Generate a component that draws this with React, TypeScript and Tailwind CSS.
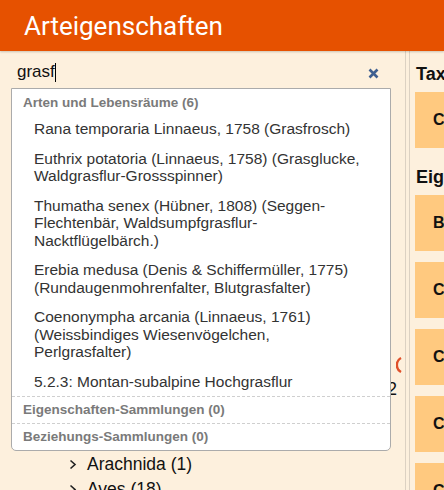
import { useState } from "react";

const results = [
  "Rana temporaria Linnaeus, 1758 (Grasfrosch)",
  "Euthrix potatoria (Linnaeus, 1758) (Grasglucke, Waldgrasflur-Grossspinner)",
  "Thumatha senex (Hübner, 1808) (Seggen-Flechtenbär, Waldsumpfgrasflur-Nacktflügelbärch.)",
  "Erebia medusa (Denis & Schiffermüller, 1775) (Rundaugenmohrenfalter, Blutgrasfalter)",
  "Coenonympha arcania (Linnaeus, 1761) (Weissbindiges Wiesenvögelchen, Perlgrasfalter)",
  "5.2.3: Montan-subalpine Hochgrasflur",
];

const Chevron = () => (
  <svg width="8" height="11" viewBox="0 0 8 11" className="shrink-0">
    <path d="M1.5 1.5 L6 5.5 L1.5 9.5" fill="none" stroke="#222" strokeWidth="1.6" />
  </svg>
);

const App = () => {
  const [query] = useState("grasf");

  return (
    <div className="w-[444px] h-[490px] overflow-hidden flex flex-col bg-[#fdf0dd] font-['Liberation_Sans',Arial,sans-serif]">
      <header className="h-[51px] shrink-0 bg-[#e65100] flex items-center px-6 shadow-[0_1px_2px_rgba(0,0,0,0.2)] z-10">
        <h1 className="text-white text-[26px] font-['Roboto',sans-serif] font-normal leading-none">
          Arteigenschaften
        </h1>
      </header>

      <div className="flex flex-1 min-h-0">
        {/* left: search + taxonomy tree */}
        <div className="w-[406px] shrink-0 border-r border-[#dcd1c2] relative overflow-hidden">
          <div className="h-[37px] pt-[11px] pl-[17px] pr-[26px] flex justify-between">
            <div className="flex items-center h-[20px] text-[17px] leading-[20px] text-[#111]">
              <span>{query}</span>
              <span className="w-px h-[19px] bg-black" />
            </div>
            <svg width="11" height="11" viewBox="0 0 11 11" className="mt-[6px]">
              <path d="M1.5 1.5 L9.5 9.5 M9.5 1.5 L1.5 9.5" stroke="#3f5f90" strokeWidth="2.6" />
            </svg>
          </div>

          <div className="pt-[264px] text-[17.5px] leading-[25px] text-[#111]">
            <div className="h-[25px] flex justify-end pr-[3px]">
              <svg width="6" height="16" viewBox="0 0 6 16" className="mt-[5px]">
                <path d="M5 1 A8 8 0 0 0 5 15" fill="none" stroke="#e0502a" strokeWidth="2.4" />
              </svg>
            </div>
            <div className="h-[25px] flex justify-end pr-[8px]">2</div>
            <div className="h-[25px]" />
            <div className="h-[25px]" />
            <div className="h-[25px] flex items-center gap-[10px] pl-[69px]">
              <Chevron />
              <span>Arachnida (1)</span>
            </div>
            <div className="h-[25px] flex items-center gap-[10px] pl-[69px]">
              <Chevron />
              <span>Aves (18)</span>
            </div>
          </div>

          {/* autocomplete menu */}
          <div className="absolute left-[11px] top-[37px] w-[380px] bg-white border border-[#ababab] rounded-b-[5px] text-[#333]">
            <div className="pt-[6px] pb-[3px] pl-[11px] text-[13.5px] leading-[16px] font-bold text-[#7a7a7a]">
              Arten und Lebensräume (6)
            </div>
            {results.map((r) => (
              <div key={r} className="py-[6px] pl-[22px] pr-[22px] text-[15.5px] leading-[17.5px]">
                {r}
              </div>
            ))}
            <div className="border-t border-dashed border-[#cfcfcf] pt-[5px] pb-[5px] pl-[11px] text-[13.5px] leading-[16px] font-bold text-[#7a7a7a]">
              Eigenschaften-Sammlungen (0)
            </div>
            <div className="border-t border-dashed border-[#cfcfcf] pt-[5px] pb-[5px] pl-[11px] text-[13.5px] leading-[16px] font-bold text-[#7a7a7a]">
              Beziehungs-Sammlungen (0)
            </div>
          </div>
        </div>

        {/* right: properties */}
        <div className="ml-[3px] flex-1 border-l border-[#dcd1c2] pl-[5px] pt-[12px] overflow-hidden text-[#111]">
          <h2 className="text-[18px] leading-[22px] font-bold pl-px">Taxonomie</h2>
          <div className="mt-[7px] h-[56px] w-[120px] bg-[#ffc97f] flex items-center pl-[18px] text-[16px] font-bold">
            C
          </div>
          <h2 className="mt-[18px] text-[18px] leading-[22px] font-bold pl-px">Eigenschaften</h2>
          <div className="mt-[7px] flex flex-col gap-[11px]">
            {["B", "C", "C", "C", "C"].map((l, i) => (
              <div key={i} className="h-[56px] w-[120px] shrink-0 bg-[#ffc97f] flex items-center pl-[18px] text-[16px] font-bold">
                {l}
              </div>
            ))}
          </div>
        </div>
      </div>
    </div>
  );
};

export default App;
